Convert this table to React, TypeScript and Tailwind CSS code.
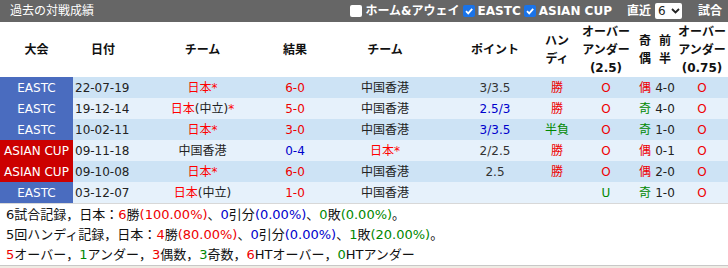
import React from "react";

const FONT = { fontFamily: '"DejaVu Sans", "Noto Sans CJK JP", sans-serif' };

const R = "text-[#ee0000]";
const B = "text-[#0000cc]";
const G = "text-[#008800]";

type Row = {
  league: "EASTC" | "ASIAN CUP";
  date: string;
  home: React.ReactNode;
  score: React.ReactNode;
  away: React.ReactNode;
  point: React.ReactNode;
  handi: React.ReactNode;
  ou: React.ReactNode;
  oe: React.ReactNode;
  ht: string;
  htou: React.ReactNode;
};

const HK = <span className="text-[#222]">中国香港</span>;
const JP = (
  <span className="text-[#ff0000]">日本*</span>
);
const JPN = (
  <span>
    <span className="text-[#ff0000]">日本</span>
    <span className="text-[#222]">(中立)</span>
    <span className="text-[#ff0000]">*</span>
  </span>
);
const JPN2 = (
  <span>
    <span className="text-[#ff0000]">日本</span>
    <span className="text-[#222]">(中立)</span>
  </span>
);

const win = <span className={R}>勝</span>;
const O = <span className={R}>O</span>;
const gu = <span className={R}>偶</span>;
const ki = <span className={G}>奇</span>;

const rows: Row[] = [
  { league: "EASTC", date: "22-07-19", home: JP, score: <span className={R}>6-0</span>, away: HK, point: <span className="text-[#333]">3/3.5</span>, handi: win, ou: O, oe: gu, ht: "4-0", htou: O },
  { league: "EASTC", date: "19-12-14", home: JPN, score: <span className={R}>5-0</span>, away: HK, point: <span className={B}>2.5/3</span>, handi: win, ou: O, oe: ki, ht: "4-0", htou: O },
  { league: "EASTC", date: "10-02-11", home: JP, score: <span className={R}>3-0</span>, away: HK, point: <span className={B}>3/3.5</span>, handi: <span className={G}>半負</span>, ou: O, oe: ki, ht: "1-0", htou: O },
  { league: "ASIAN CUP", date: "09-11-18", home: HK, score: <span className={B}>0-4</span>, away: JP, point: <span className="text-[#333]">2/2.5</span>, handi: win, ou: O, oe: gu, ht: "0-1", htou: O },
  { league: "ASIAN CUP", date: "09-10-08", home: JP, score: <span className={R}>6-0</span>, away: HK, point: <span className="text-[#333]">2.5</span>, handi: win, ou: O, oe: gu, ht: "2-0", htou: O },
  { league: "EASTC", date: "03-12-07", home: JPN2, score: <span className={R}>1-0</span>, away: HK, point: "", handi: "", ou: <span className={G}>U</span>, oe: ki, ht: "1-0", htou: O },
];

const GRID =
  "grid grid-cols-[73px_60px_139px_46px_134px_86px_38px_60px_18px_22px_52px]";

function Check({ checked }: { checked: boolean }) {
  if (!checked) {
    return <span className="inline-block w-[12px] h-[12px] bg-white rounded-[2px] mr-[3px]" />;
  }
  return (
    <span className="inline-flex items-center justify-center w-[12px] h-[12px] bg-[#1a73e8] rounded-[2px] mr-[3px] ml-[3px]">
      <svg width="10" height="10" viewBox="0 0 10 10">
        <path d="M2 5.2 L4.2 7.4 L8.2 2.8" stroke="white" strokeWidth="1.8" fill="none" />
      </svg>
    </span>
  );
}

export default function App() {
  return (
    <div style={FONT} className="w-[728px] h-[268px] bg-[#efece4] text-[12px] text-[#222]">
      {/* title bar */}
      <div className="h-[22px] bg-[#666666] flex items-center justify-between text-white pl-[10px] pr-[6px]">
        <span className="leading-none">過去の対戦成績</span>
        <div className="flex items-center font-bold leading-none">
          <Check checked={false} />
          <span>ホーム&amp;アウェイ</span>
          <Check checked />
          <span>EASTC</span>
          <Check checked />
          <span>ASIAN CUP</span>
          <span className="ml-[15px]">直近</span>
          <span className="ml-[4px] mr-[16px] inline-flex items-center justify-between w-[27px] h-[16px] bg-white text-[#222] font-normal pl-[3px] pr-[2px] rounded-[2px]">
            6
            <svg width="9" height="6" viewBox="0 0 9 6">
              <path d="M1 1 L4.5 4.5 L8 1" stroke="#222" strokeWidth="1.8" fill="none" />
            </svg>
          </span>
          <span>試合</span>
        </div>
      </div>

      {/* header row */}
      <div className={`${GRID} h-[55px] bg-white font-bold text-[#111] leading-[18px] text-center items-center`}>
        <div>大会</div>
        <div>日付</div>
        <div>チーム</div>
        <div>結果</div>
        <div>チーム</div>
        <div>ポイント</div>
        <div>ハン<br />ディ</div>
        <div>オーバー<br />アンダー<br />(2.5)</div>
        <div>奇<br />偶</div>
        <div>前<br />半</div>
        <div>オーバー<br />アンダー<br />(0.75)</div>
      </div>

      {/* data rows */}
      {rows.map((r, i) => (
        <div
          key={i}
          className={`${GRID} h-[21px] items-center text-center ${i % 2 === 0 ? "bg-[#cde3f5]" : "bg-[#e6f1fb]"}`}
        >
          <div
            className={`h-full flex items-center justify-center text-white ${r.league === "EASTC" ? "bg-[#4a6cbf]" : "bg-[#cc0000]"}`}
          >
            {r.league}
          </div>
          <div className="text-left pl-[2px] text-[#222]">{r.date}</div>
          <div>{r.home}</div>
          <div>{r.score}</div>
          <div>{r.away}</div>
          <div>{r.point}</div>
          <div>{r.handi}</div>
          <div>{r.ou}</div>
          <div>{r.oe}</div>
          <div className="text-[#222]">{r.ht}</div>
          <div>{r.htou}</div>
        </div>
      ))}

      {/* summary */}
      <div className="bg-white border-t border-[#d8d8d8] border-b border-b-[#c8c8c8] pl-[6px] pt-[1px] h-[63px] text-[13px] leading-[20px] text-[#111]">
        <div>
          6試合記録，日本：<span className={R}>6</span>勝<span className={R}>(100.00%)</span>、<span className={B}>0</span>引分<span className={B}>(0.00%)</span>、<span className={G}>0</span>敗<span className={G}>(0.00%)</span>。
        </div>
        <div>
          5回ハンディ記録，日本：<span className={R}>4</span>勝<span className={R}>(80.00%)</span>、<span className={B}>0</span>引分<span className={B}>(0.00%)</span>、<span className={G}>1</span>敗<span className={G}>(20.00%)</span>。
        </div>
        <div>
          <span className={R}>5</span>オーバー，<span className={G}>1</span>アンダー，<span className={R}>3</span>偶数，<span className={G}>3</span>奇数，<span className={R}>6</span>HTオーバー，<span className={G}>0</span>HTアンダー
        </div>
      </div>
    </div>
  );
}
